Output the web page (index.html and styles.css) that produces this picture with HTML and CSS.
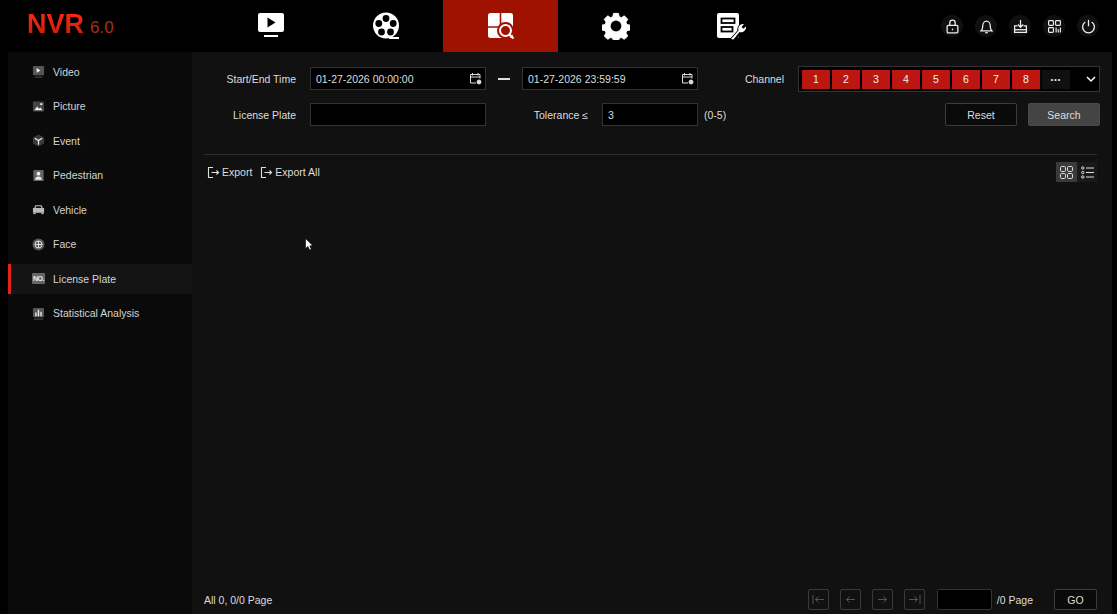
FILE: index.html
```html
<!DOCTYPE html>
<html lang="en">
<head>
    <meta charset="UTF-8">
    <title>NVR 6.0 - License Plate Search</title>
    <link rel="stylesheet" href="styles.css">
</head>
<body>
    <header class="topbar">
        <div class="logo"><span class="logo-name">NVR</span><span class="logo-ver">6.0</span></div>
        <nav class="main-nav">
            <div class="nav-item">
                <svg width="28" height="28" viewBox="0 0 28 28"><rect x="1" y="1" width="26" height="19" rx="2" fill="#fff"/><path d="M10.5 5.5v10l8-5z" fill="#000"/><rect x="7" y="23" width="14" height="2" fill="#fff"/></svg>
            </div>
            <div class="nav-item">
                <svg width="28" height="28" viewBox="0 0 28 28"><path d="M14 .5a13 13 0 1 1 0 26a13 13 0 0 1 0-26z" fill="#fff"/><rect x="17" y="25" width="10" height="2" fill="#fff"/><g fill="#000"><circle cx="14" cy="6.5" r="3.4"/><circle cx="6.8" cy="11.5" r="3.4"/><circle cx="21.2" cy="11.5" r="3.4"/><circle cx="9.5" cy="20" r="3.4"/><circle cx="18.5" cy="20" r="3.4"/></g></svg>
            </div>
            <div class="nav-item active">
                <svg width="28" height="28" viewBox="0 0 28 28"><rect x="1" y="1" width="25" height="25" rx="2.500" fill="#fff"/><path d="M13.500 1v12M1 15h13" stroke="#a01200" stroke-width="1.600"/><circle cx="18.500" cy="18.500" r="8.500" fill="#a01200"/><circle cx="18.500" cy="18.500" r="5.500" fill="#a01200" stroke="#fff" stroke-width="2"/><path d="M22.500 22.500l4 4" stroke="#fff" stroke-width="2.200"/></svg>
            </div>
            <div class="nav-item">
                <svg width="28" height="28" viewBox="0 0 30 30"><path d="M12.400 1.500h5.200l.8 3.600 2.400 1 3.100-2 3.700 3.700-2 3.100 1 2.400 3.400.8v5.200l-3.400.8-1 2.400 2 3.100-3.700 3.700-3.100-2-2.400 1-.8 3.400h-5.200l-.8-3.400-2.400-1-3.100 2-3.700-3.700 2-3.100-1-2.400-3.400-.8v-5.200l3.400-.8 1-2.400-2-3.100 3.700-3.700 3.100 2 2.400-1z" fill="#fff" stroke="#fff" stroke-linejoin="round"/><circle cx="15" cy="15" r="5.800" fill="#000"/></svg>
            </div>
            <div class="nav-item">
                <svg width="30" height="28" viewBox="0 0 30 28"><rect x="1" y="1" width="22" height="25" rx="2" fill="#fff"/><rect x="5.500" y="6.500" width="13" height="4.500" fill="none" stroke="#000" stroke-width="1.800"/><rect x="5.500" y="15" width="11" height="4.500" fill="none" stroke="#000" stroke-width="1.800"/><path d="M15 28l8-9a5.500 5.500 0 0 1 6-7l-3 3 2 2 3-2.500a5.500 5.500 0 0 1-7 6l-6 7.500z" fill="#000" stroke="#000" stroke-width="3"/><path d="M15 27l7.500-8.500a5 5 0 0 1 5.500-6.500l-2.500 3 1.800 1.800 2.700-2.300a5 5 0 0 1-6.500 5.500l-6 7.500z" fill="#fff"/></svg>
            </div>
        </nav>
        <div class="top-actions">
            <span class="round-btn"><svg width="15" height="15" viewBox="0 0 14 14" fill="none" stroke="#eee" stroke-width="1.200"><rect x="2" y="6" width="10" height="7" rx="1"/><path d="M4.500 6V3.500a2.500 2.500 0 0 1 5 0V6"/><path d="M7 9v1.500"/></svg></span>
            <span class="round-btn"><svg width="15" height="15" viewBox="0 0 14 14" fill="none" stroke="#eee" stroke-width="1.200"><path d="M2 11h10c-1-1-1.500-2-1.500-4.500C10.500 4 9 2 7 2S3.500 4 3.500 6.500C3.500 9 3 10 2 11z"/><path d="M5.800 12.800h2.400"/></svg></span>
            <span class="round-btn"><svg width="15" height="15" viewBox="0 0 14 14" fill="none" stroke="#eee" stroke-width="1.200"><path d="M4.200 6.500H1.500v6h11v-6H9.800"/><path d="M1.500 10h11"/><path d="M7 1v6.500M4.500 5.200L7 7.700l2.500-2.500"/></svg></span>
            <span class="round-btn"><svg width="15" height="15" viewBox="0 0 14 14" fill="none" stroke="#eee" stroke-width="1.100"><rect x="1.500" y="1.500" width="4.500" height="4.500" rx=".8"/><rect x="8" y="1.500" width="4.500" height="4.500" rx=".8"/><rect x="1.500" y="8" width="4.500" height="4.500" rx=".8"/><path d="M8.500 8v4.500M10.500 9.500v3M12.500 8v4.500"/></svg></span>
            <span class="round-btn"><svg width="15" height="15" viewBox="0 0 14 14" fill="none" stroke="#eee" stroke-width="1.200"><path d="M4 2.800a5.500 5.500 0 1 0 6 0"/><path d="M7 .8v6"/></svg></span>
        </div>
    </header>

    <div class="page-body">
        <aside class="sidebar">
            <div class="side-item">
                <svg class="side-icon" viewBox="0 0 14 14"><rect x="1" y="1" width="12" height="10" rx="1" fill="#555"/><path d="M5 3.200v5.200l4.200-2.600z" fill="#eee"/><rect x="3" y="12.500" width="8" height="1" fill="#555"/></svg>
                <span>Video</span>
            </div>
            <div class="side-item">
                <svg class="side-icon" viewBox="0 0 14 14"><rect x="1" y="1.500" width="12" height="11" rx="1" fill="#444"/><path d="M2.500 11l3-4 2 2.500 1.500-1.500 2.500 3z" fill="#eee"/><circle cx="10" cy="4.500" r="1.200" fill="#eee"/></svg>
                <span>Picture</span>
            </div>
            <div class="side-item">
                <svg class="side-icon" viewBox="0 0 14 14"><path d="M7 .5l6 3.200v6.600l-6 3.200-6-3.200V3.700z" fill="#3a3a3a"/><path d="M3 4.500L7 7l4-2.500M7 7v4.500" fill="none" stroke="#eee" stroke-width="1.300"/></svg>
                <span>Event</span>
            </div>
            <div class="side-item">
                <svg class="side-icon" viewBox="0 0 14 14"><rect x="1.500" y="1" width="11" height="12" rx="1" fill="#666"/><circle cx="7" cy="5" r="2" fill="#eee"/><path d="M3.500 11.500c0-2.500 1.500-3.500 3.500-3.500s3.500 1 3.500 3.500z" fill="#eee"/></svg>
                <span>Pedestrian</span>
            </div>
            <div class="side-item">
                <svg class="side-icon" viewBox="0 0 14 14"><path d="M3.500 2.500h7l1 3H13v5H1v-5h1.500z" fill="#bbb"/><path d="M4.500 3.500h5l.6 2H3.900z" fill="#111"/><rect x="1.500" y="10.500" width="2.500" height="1.500" fill="#bbb"/><rect x="10" y="10.500" width="2.500" height="1.500" fill="#bbb"/></svg>
                <span>Vehicle</span>
            </div>
            <div class="side-item">
                <svg class="side-icon" viewBox="0 0 14 14"><circle cx="7" cy="7" r="6.500" fill="#555"/><circle cx="7" cy="7" r="3.800" fill="none" stroke="#eee"/><path d="M3.500 7h7M7 3.500v7" stroke="#eee"/></svg>
                <span>Face</span>
            </div>
            <div class="side-item active">
                <span class="plate-icon">NO.</span>
                <span>License Plate</span>
            </div>
            <div class="side-item">
                <svg class="side-icon" viewBox="0 0 14 14"><rect x="1" y="1" width="12" height="10" rx="1" fill="#555"/><path d="M3.500 6h1.500v4H3.500zM6.200 3h1.500v7H6.200zM9 5h1.500v5H9z" fill="#eee"/><rect x="2" y="12.500" width="10" height="1" fill="#555"/></svg>
                <span>Statistical Analysis</span>
            </div>
        </aside>

        <main class="content">
            <div class="filter-row first">
                <label class="field-label">Start/End Time</label>
                <div class="input date-input">
                    <span>01-27-2026 00:00:00</span>
                    <svg width="13" height="13" viewBox="0 0 13 13" fill="none" stroke="#ddd"><path d="M7 11H1.500V2.500h9.500V6.500M1.500 5h9.500M3.500 1v2.500M9 1v2.500"/><circle cx="10" cy="10" r="2" fill="#ddd"/></svg>
                </div>
                <span class="range-dash"></span>
                <div class="input date-input">
                    <span>01-27-2026 23:59:59</span>
                    <svg width="13" height="13" viewBox="0 0 13 13" fill="none" stroke="#ddd"><path d="M7 11H1.500V2.500h9.500V6.500M1.500 5h9.500M3.500 1v2.500M9 1v2.500"/><circle cx="10" cy="10" r="2" fill="#ddd"/></svg>
                </div>
                <label class="channel-label">Channel</label>
                <div class="channel-box">
                    <span class="chan">1</span>
                    <span class="chan">2</span>
                    <span class="chan">3</span>
                    <span class="chan">4</span>
                    <span class="chan">5</span>
                    <span class="chan">6</span>
                    <span class="chan">7</span>
                    <span class="chan">8</span>
                    <span class="chan more">&#8226;&#8226;&#8226;</span>
                    <svg class="chan-arrow" width="12" height="12" viewBox="0 0 12 12" fill="none" stroke="#fff" stroke-width="1.500"><path d="M2 4l4 4 4-4"/></svg>
                </div>
            </div>
            <div class="filter-row">
                <label class="field-label">License Plate</label>
                <div class="input plate-input"></div>
                <label class="field-label tolerance-label">Tolerance &#8804;</label>
                <div class="input tolerance-input"><span>3</span></div>
                <span class="range-hint">(0-5)</span>
                <button class="btn reset-btn">Reset</button>
                <button class="btn search-btn">Search</button>
            </div>
            <div class="divider"></div>
            <div class="toolbar">
                <span class="export-link">
                    <svg width="13" height="13" viewBox="0 0 13 13" fill="none" stroke="#ddd" stroke-width="1.100"><path d="M6 1.500H1.500v10H6M4.500 6.500h7M9.500 4.500l2 2-2 2"/></svg>
                    Export
                </span>
                <span class="export-link">
                    <svg width="13" height="13" viewBox="0 0 13 13" fill="none" stroke="#ddd" stroke-width="1.100"><path d="M6 1.500H1.500v10H6M4.500 6.500h7M9.500 4.500l2 2-2 2"/></svg>
                    Export All
                </span>
                <div class="view-toggle">
                    <span class="view-btn active"><svg width="13" height="13" viewBox="0 0 13 13" fill="none" stroke="#ddd"><rect x=".5" y=".5" width="5" height="5" rx="1.200"/><rect x="7.500" y=".5" width="5" height="5" rx="1.200"/><rect x=".5" y="7.500" width="5" height="5" rx="1.200"/><rect x="7.500" y="7.500" width="5" height="5" rx="1.200"/></svg></span>
                    <span class="view-btn"><svg width="13" height="13" viewBox="0 0 13 13" fill="none" stroke="#ddd"><circle cx="1.800" cy="2" r="1.200"/><circle cx="1.800" cy="6.500" r="1.200"/><circle cx="1.800" cy="11" r="1.200"/><path d="M5 2h8M5 6.500h8M5 11h8"/></svg></span>
                </div>
            </div>
            <div class="results"></div>
            <footer class="pager">
                <span class="pager-total">All 0, 0/0 Page</span>
                <span class="page-btn"><svg width="13" height="11" viewBox="0 0 13 11" fill="none" stroke="#555"><path d="M1 1v9M12 5.500H3.500M6.500 2.500l-3 3 3 3"/></svg></span>
                <span class="page-btn"><svg width="13" height="11" viewBox="0 0 13 11" fill="none" stroke="#555"><path d="M11 5.500H2.500M5.500 2.500l-3 3 3 3"/></svg></span>
                <span class="page-btn"><svg width="13" height="11" viewBox="0 0 13 11" fill="none" stroke="#555"><path d="M2 5.500h8.500M7.500 2.500l3 3-3 3"/></svg></span>
                <span class="page-btn"><svg width="13" height="11" viewBox="0 0 13 11" fill="none" stroke="#555"><path d="M12 1v9M1 5.500h8.500M6.500 2.500l3 3-3 3"/></svg></span>
                <div class="input page-input"></div>
                <span class="page-count">/0 Page</span>
                <button class="btn go-btn">GO</button>
            </footer>
        </main>
    </div>

    <svg class="cursor" width="9" height="13" viewBox="0 0 9 13"><path d="M.5.5v10l2.500-2 1.500 3.500 1.800-.8L4.800 7.800H8z" fill="#fff" stroke="#000" stroke-width=".6"/></svg>
</body>
</html>
```

FILE: styles.css
```css
* {
    box-sizing: border-box;
    margin: 0;
    padding: 0;
}

html, body {
    height: 100%;
    overflow: hidden;
}

body {
    background-color: #000000;
    color: #dddddd;
    font-family: "Liberation Sans", Arial, sans-serif;
    font-size: 10.5px;
    display: flex;
    flex-direction: column;
}

.topbar {
    height: 52px;
    display: flex;
    align-items: center;
    flex-shrink: 0;
}

.logo {
    width: 213px;
    padding-left: 27px;
    padding-bottom: 3px;
    display: flex;
    align-items: baseline;
    white-space: nowrap;
}

.logo-name {
    font-size: 27px;
    font-weight: bold;
    background: linear-gradient(180deg, #ff2a12, #c81a0c);
    -webkit-background-clip: text;
    background-clip: text;
    color: transparent;
}

.logo-ver {
    font-size: 17px;
    color: #a3301f;
    margin-left: 6px;
}

.main-nav {
    display: flex;
    height: 100%;
}

.nav-item {
    width: 115px;
    height: 100%;
    display: flex;
    align-items: center;
    justify-content: center;
}

.nav-item.active {
    background-color: #a01200;
}

.top-actions {
    margin-left: auto;
    padding-right: 18px;
    display: flex;
    gap: 12px;
}

.round-btn {
    width: 22px;
    height: 22px;
    border-radius: 50%;
    background-color: #101010;
    display: flex;
    align-items: center;
    justify-content: center;
}

.page-body {
    flex: 1;
    display: flex;
    padding: 0 5px 0 8px;
    min-height: 0;
}

.sidebar {
    width: 184px;
    flex-shrink: 0;
    background-color: #0a0a0a;
    padding-top: 4.8px;
    display: flex;
    flex-direction: column;
    gap: 4.5px;
}

.side-item {
    height: 30px;
    display: flex;
    align-items: center;
    padding-left: 24px;
    gap: 8px;
    color: #d4d4d4;
}

.side-item.active {
    background-color: #141414;
    border-left: 3px solid #e8201a;
    padding-left: 21px;
}

.side-icon {
    width: 13px;
    height: 13px;
}

.plate-icon {
    width: 13px;
    height: 11px;
    background-color: #666;
    color: #eee;
    font-size: 7px;
    font-weight: bold;
    line-height: 11px;
    text-align: center;
    border-radius: 1px;
    letter-spacing: -0.5px;
}

.content {
    flex: 1;
    min-width: 0;
    background-color: #111111;
    padding: 14px 12px 4px 12px;
    display: flex;
    flex-direction: column;
}

.filter-row {
    display: flex;
    align-items: center;
    height: 23px;
}

.filter-row.first {
    height: 26px;
    margin-bottom: 11px;
}

.field-label {
    width: 92px;
    margin-right: 14px;
    text-align: right;
    flex-shrink: 0;
}

.input {
    height: 23px;
    background-color: #000000;
    border: 1px solid #333333;
    padding: 0 5px;
    display: flex;
    align-items: center;
    flex-shrink: 0;
}

.date-input {
    width: 176px;
    margin-bottom: 1px;
    justify-content: space-between;
    padding-right: 3px;
}

.plate-input {
    width: 176px;
}

.range-dash {
    width: 36px;
    display: flex;
    justify-content: center;
}

.range-dash::before {
    content: "";
    width: 12px;
    height: 2px;
    background-color: #dddddd;
}

.channel-label {
    margin-left: auto;
    margin-right: 14px;
}

.channel-box {
    width: 302px;
    height: 26px;
    background-color: #000000;
    border: 1px solid #333333;
    padding-left: 3px;
    display: flex;
    align-items: center;
    gap: 2px;
}

.chan {
    width: 28px;
    height: 19px;
    background-color: #bb1610;
    color: #f0f0f0;
    display: flex;
    align-items: center;
    justify-content: center;
}

.chan.more {
    background-color: #101010;
    font-size: 7px;
    letter-spacing: 1px;
}

.chan-arrow {
    margin-left: 13px;
}

.tolerance-label {
    width: 102px;
}

.tolerance-input {
    width: 96px;
}

.range-hint {
    margin-left: 6px;
}

.btn {
    height: 23px;
    width: 72px;
    border-radius: 2px;
    font-family: inherit;
    font-size: 10.5px;
    color: #dddddd;
    flex-shrink: 0;
}

.reset-btn {
    margin-left: auto;
    background-color: #0a0a0a;
    border: 1px solid #3c3c3c;
}

.search-btn {
    margin-left: 11px;
    background-color: #444444;
    border: 1px solid #4a4a4a;
}

.divider {
    height: 1px;
    background-color: #2e2e2e;
    margin-top: 28px;
    margin-right: 3px;
    flex-shrink: 0;
}

.toolbar {
    margin-top: 7px;
    margin-right: 3px;
    padding-left: 3px;
    height: 20px;
    display: flex;
    align-items: center;
    gap: 8px;
}

.export-link {
    display: flex;
    align-items: center;
    gap: 2px;
}

.view-toggle {
    margin-left: auto;
    display: flex;
}

.view-btn {
    width: 20px;
    height: 20px;
    background-color: #191919;
    display: flex;
    align-items: center;
    justify-content: center;
}

.view-btn.active {
    width: 21px;
    background-color: #3a3a3a;
}

.results {
    flex: 1;
}

.pager {
    display: flex;
    align-items: center;
    height: 21px;
}

.pager-total {
    margin-right: auto;
}

.page-btn {
    width: 21px;
    height: 21px;
    border: 1px solid #3a3a3a;
    border-radius: 2px;
    margin-right: 11px;
    display: flex;
    align-items: center;
    justify-content: center;
}

.page-input {
    width: 55px;
    height: 21px;
    margin-left: 1px;
    border-radius: 2px;
}

.page-count {
    margin-left: 5px;
    margin-right: 21px;
}

.go-btn {
    width: 43px;
    height: 21px;
    margin-right: 3px;
    background-color: #0a0a0a;
    border: 1px solid #3c3c3c;
}

.cursor {
    position: absolute;
    left: 305px;
    top: 238px;
}
```
